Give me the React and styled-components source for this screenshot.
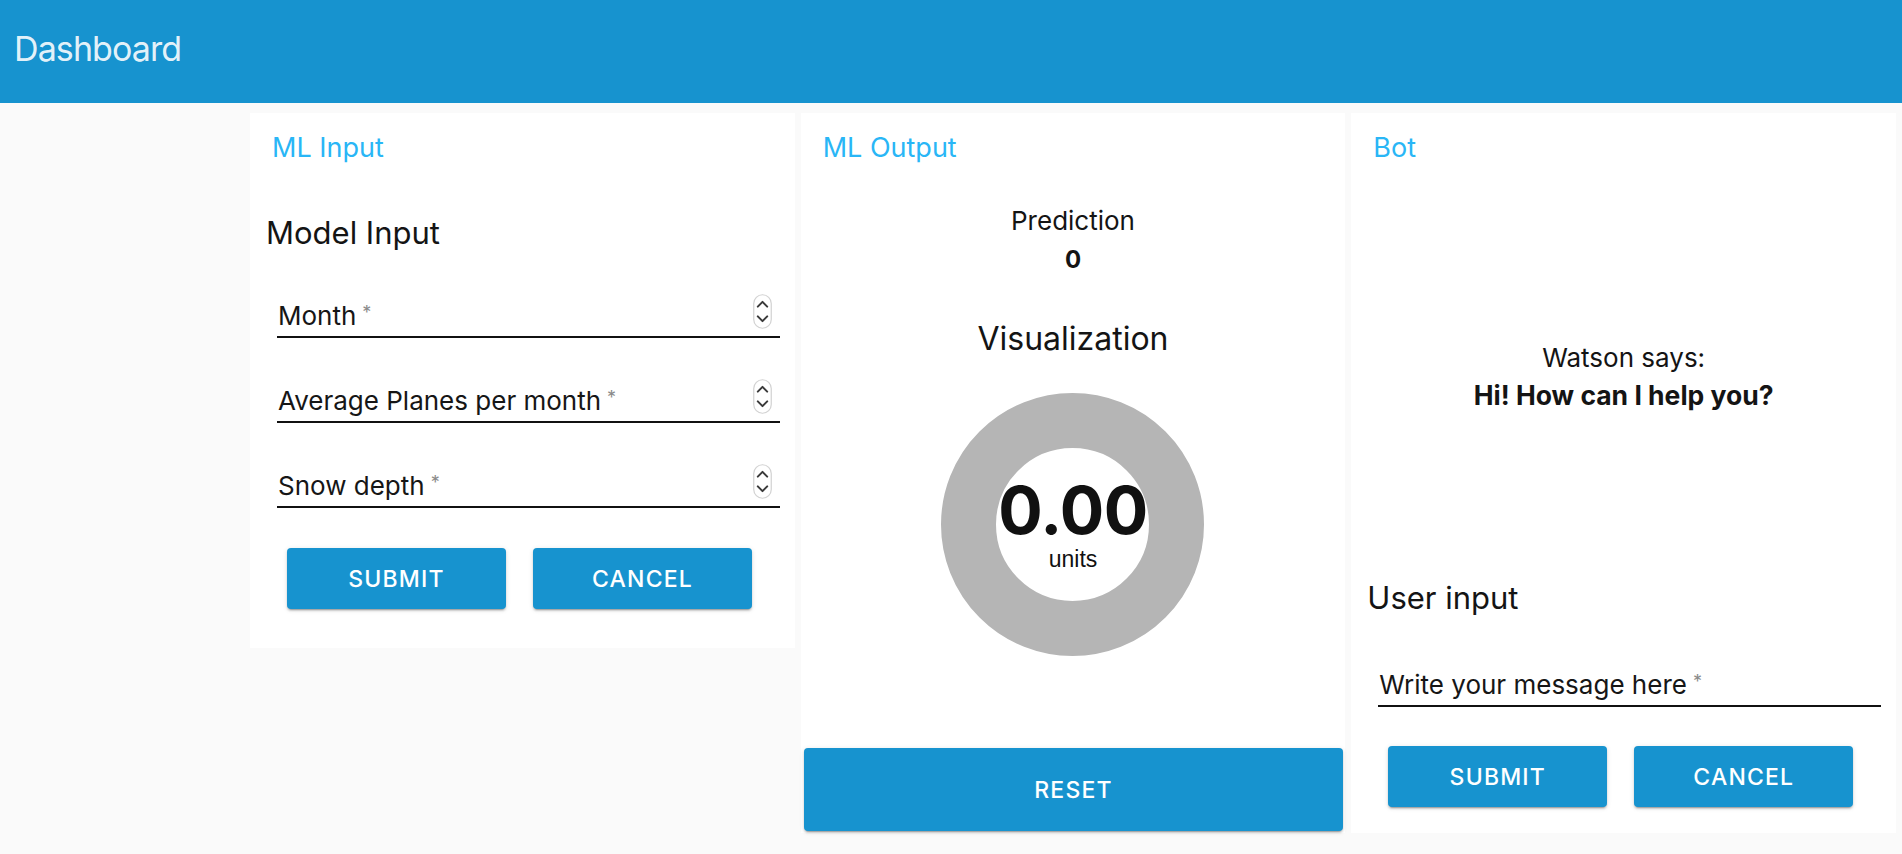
import React from 'react';
import styled, { createGlobalStyle } from 'styled-components';

const GlobalStyle = createGlobalStyle`
  html, body { margin: 0; padding: 0; background: #fafafa; }
  body { font-family: Inter, "Noto Sans", sans-serif; color: #161616; }
  * { box-sizing: border-box; }
`;

const Page = styled.div`
  min-height: 854px;
  background: #fafafa;
`;

const Header = styled.header`
  height: 103px;
  background: #1793cf;
  padding: 28px 0 0 14px;
`;

const HeaderTitle = styled.h1`
  margin: 0;
  font-size: 34px;
  line-height: 41px;
  font-weight: 400;
  letter-spacing: -0.9px;
  color: rgba(255, 255, 255, 0.9);
`;

const Grid = styled.main`
  display: grid;
  grid-template-columns: repeat(3, 1fr);
  gap: 6px;
  padding: 10px 6px 0 250px;
  align-items: start;
`;

const Panel = styled.section`
  background: #fff;
  display: flex;
  flex-direction: column;
  padding-bottom: ${(p) => p.$pb}px;
`;

const PanelTitle = styled.h2`
  margin: 19px 0 0 22px;
  font-size: 27px;
  line-height: 32px;
  font-weight: 400;
  color: #29b6f6;
`;

const SectionHeading = styled.h3`
  margin: ${(p) => p.$mt}px 0 ${(p) => p.$mb}px 16px;
  font-size: 31px;
  line-height: 38px;
  font-weight: 400;
  color: #141414;
`;

const Field = styled.div`
  display: flex;
  align-items: flex-end;
  margin: 0 15px 0 27px;
  padding: 47px 0 4px 1px;
  border-bottom: 2px solid #111;
`;

const Label = styled.label`
  flex: 1;
  font-size: 26px;
  line-height: 32px;
  color: #161616;
  white-space: nowrap;
`;

const Asterisk = styled.span`
  font-size: 18px;
  line-height: 1;
  color: #8a8a8a;
  margin-left: 6px;
  vertical-align: 6px;
`;

const Spinner = styled.svg`
  flex: none;
  width: 19px;
  height: 35px;
  margin: -6px 8px 3px 0;
`;

const ButtonRow = styled.div`
  display: flex;
  gap: 27px;
  margin: ${(p) => p.$mt}px 0 0 37px;
`;

const Button = styled.button`
  display: flex;
  align-items: center;
  justify-content: center;
  width: ${(p) => p.$w || '219px'};
  height: ${(p) => p.$h || '61px'};
  margin: ${(p) => p.$m || '0'};
  border: 0;
  border-radius: 4px;
  background: #1793cf;
  color: #fff;
  font-family: Inter, "Noto Sans", sans-serif;
  font-size: 23px;
  line-height: 28px;
  font-weight: 500;
  letter-spacing: 1.2px;
  text-transform: uppercase;
  box-shadow: 0 3px 1px -2px rgba(0, 0, 0, 0.2), 0 2px 2px 0 rgba(0, 0, 0, 0.14),
    0 1px 5px 0 rgba(0, 0, 0, 0.12);
  cursor: pointer;
`;

const CenterText = styled.div`
  margin-top: ${(p) => p.$mt}px;
  text-align: center;
  font-size: ${(p) => p.$size}px;
  line-height: ${(p) => p.$lh}px;
  font-weight: ${(p) => (p.$bold ? 700 : 400)};
  color: #141414;
`;

const Donut = styled.div`
  align-self: center;
  margin-top: 35px;
  width: 263px;
  height: 263px;
  border-radius: 50%;
  border: 55px solid #b5b5b5;
  background: #fff;
  display: flex;
  flex-direction: column;
  align-items: center;
  justify-content: center;
`;

const DonutValue = styled.div`
  font-size: 66px;
  line-height: 66px;
  font-weight: 700;
  color: #111;
  white-space: nowrap;
  letter-spacing: -0.5px;
`;

const DonutUnit = styled.div`
  margin-top: 3px;
  font-family: "Liberation Sans", Arial, sans-serif;
  font-size: 23px;
  line-height: 26px;
  color: #111;
`;

const SpinnerIcon = () => (
  <Spinner viewBox="0 0 19 35">
    <rect x="0.75" y="0.75" width="17.5" height="33.5" rx="8.75" fill="#fff" stroke="#d2d2d2" strokeWidth="1.2" />
    <path d="M4.8 12.6 L9.5 7.9 L14.2 12.6" fill="none" stroke="#3a3a3a" strokeWidth="2" strokeLinecap="round" strokeLinejoin="round" />
    <path d="M4.8 22.4 L9.5 27.1 L14.2 22.4" fill="none" stroke="#3a3a3a" strokeWidth="2" strokeLinecap="round" strokeLinejoin="round" />
  </Spinner>
);

const InputField = ({ label, spinner }) => (
  <Field>
    <Label>
      {label}
      <Asterisk>*</Asterisk>
    </Label>
    {spinner && <SpinnerIcon />}
  </Field>
);

export default function App() {
  return (
    <Page>
      <GlobalStyle />
      <Header>
        <HeaderTitle>Dashboard</HeaderTitle>
      </Header>
      <Grid>
        <Panel $pb={39}>
          <PanelTitle>ML Input</PanelTitle>
          <SectionHeading $mt={50} $mb={1}>Model Input</SectionHeading>
          <InputField label="Month" spinner />
          <InputField label="Average Planes per month" spinner />
          <InputField label="Snow depth" spinner />
          <ButtonRow $mt={40}>
            <Button>Submit</Button>
            <Button>Cancel</Button>
          </ButtonRow>
        </Panel>

        <Panel $pb={2}>
          <PanelTitle>ML Output</PanelTitle>
          <CenterText $mt={42} $size={26} $lh={30}>Prediction</CenterText>
          <CenterText $mt={9} $size={24} $lh={29} $bold>0</CenterText>
          <CenterText $mt={45} $size={32} $lh={39}>Visualization</CenterText>
          <Donut>
            <DonutValue>0.00</DonutValue>
            <DonutUnit>units</DonutUnit>
          </Donut>
          <Button $w="auto" $h="83px" $m="92px 2px 0 3px">Reset</Button>
        </Panel>

        <Panel $pb={26}>
          <PanelTitle>Bot</PanelTitle>
          <CenterText $mt={178} $size={26} $lh={32}>Watson says:</CenterText>
          <CenterText $mt={5} $size={26.5} $lh={32} $bold>Hi! How can I help you?</CenterText>
          <SectionHeading $mt={168} $mb={5}>User input</SectionHeading>
          <InputField label="Write your message here" />
          <ButtonRow $mt={39}>
            <Button>Submit</Button>
            <Button>Cancel</Button>
          </ButtonRow>
        </Panel>
      </Grid>
    </Page>
  );
}
